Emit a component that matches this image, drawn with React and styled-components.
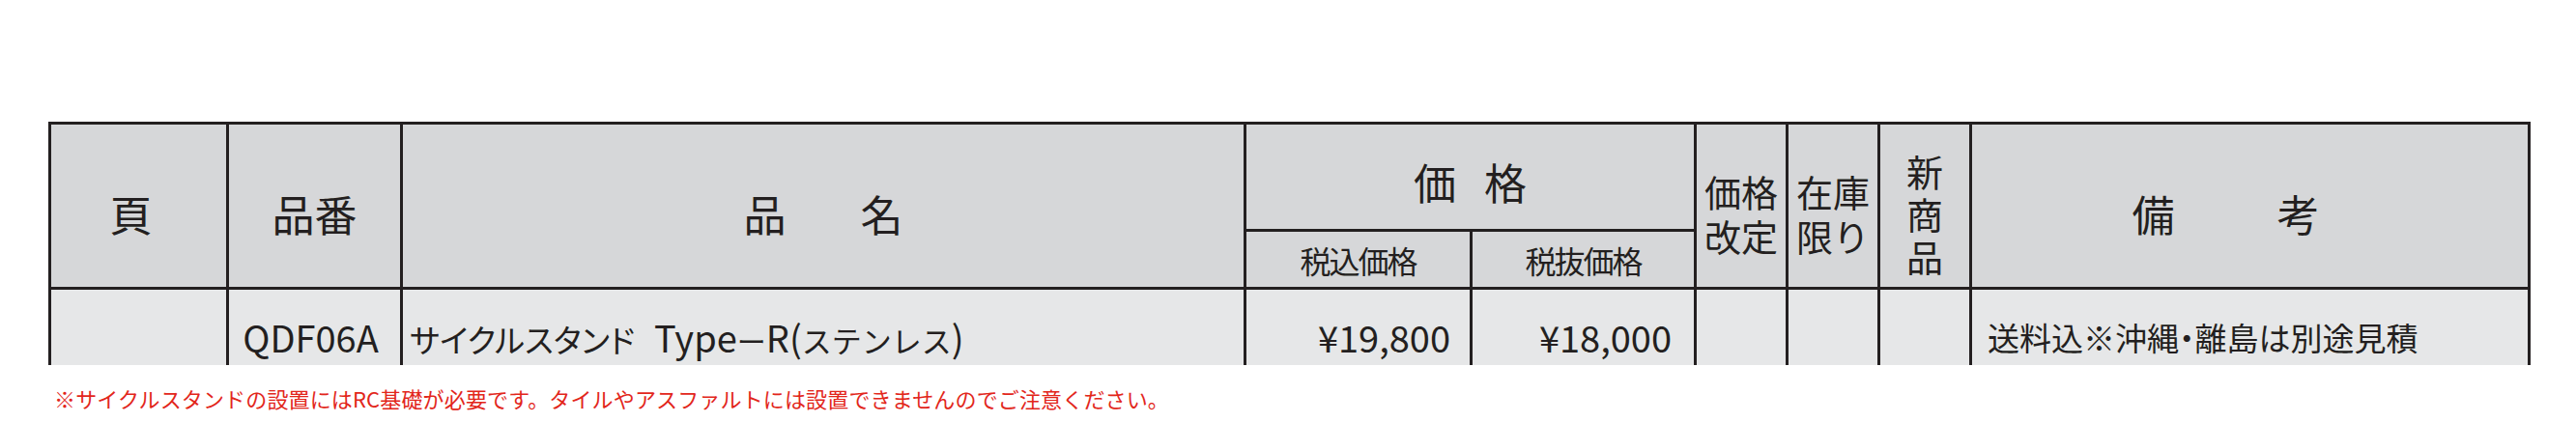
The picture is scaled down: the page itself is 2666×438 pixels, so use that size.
import React from "react";
import styled, { createGlobalStyle } from "styled-components";

const Global = createGlobalStyle`
  html, body {
    margin: 0;
    background: #ffffff;
  }
  body {
    font-family: "Noto Sans CJK JP", "Noto Sans", sans-serif;
    color: #231f20;
  }
`;

const Page = styled.div`
  box-sizing: border-box;
  width: 2666px;
  height: 438px;
  padding: 126px 0 0 50px;
  overflow: hidden;
`;

// the picture is cut off in the middle of the first body row
const Frame = styled.div`
  width: 2569px;
  height: 252px;
  overflow: hidden;
`;

const Grid = styled.div`
  display: grid;
  grid-template-columns: 181px 177px 870px 231px 229px 92px 92px 92px 575px;
  grid-template-rows: 108px 57px 104px;
  gap: 3px;
  padding: 3px;
  background: #231f20;
  width: max-content;
`;

const Cell = styled.div`
  box-sizing: border-box;
  display: flex;
  align-items: center;
  justify-content: ${(p) => p.$justify || "center"};
  grid-column: ${(p) => p.$col};
  grid-row: ${(p) => p.$row};
  background: ${(p) => (p.$head ? "#d6d7d9" : "#e6e7e8")};
  padding: ${(p) => p.$pad || "0"};
  white-space: nowrap;
`;

const HeadText = styled.span`
  display: flex;
  gap: ${(p) => p.$gap || "0px"};
  font-size: ${(p) => p.$size || "44px"};
  line-height: 1;
  letter-spacing: ${(p) => p.$track || "0"};
`;

const Stack = styled.span`
  display: flex;
  flex-direction: column;
  align-items: center;
  font-size: 38px;
  line-height: ${(p) => p.$lh || "46px"};
`;

const BodyText = styled.span`
  font-size: 33px;
  line-height: 1;
  font-feature-settings: "palt";
`;

const Latin = styled.span`
  font-size: 38px;
  margin-left: ${(p) => p.$lead || "0"};
`;

// full-width kana, not narrowed by palt
const Wide = styled.span`
  font-size: ${(p) => p.$size || "31px"};
  font-feature-settings: normal;
`;

const Note = styled.p`
  margin: 23px 0 0;
  padding-left: 6px;
  font-size: 22px;
  line-height: 22px;
  letter-spacing: 0.15px;
  color: #e2261b;
`;

export default function App() {
  return (
    <>
      <Global />
      <Page>
        <Frame>
          <Grid>
            <Cell $head $col="1" $row="1 / 3" $pad="16px 16px 0 0">
              <HeadText>頁</HeadText>
            </Cell>
            <Cell $head $col="2" $row="1 / 3" $pad="16px 0 0 0">
              <HeadText>品番</HeadText>
            </Cell>
            <Cell $head $col="3" $row="1 / 3" $pad="16px 0 0 0">
              <HeadText $gap="77px">
                <span>品</span>
                <span>名</span>
              </HeadText>
            </Cell>
            <Cell $head $col="4 / 6" $row="1" $pad="10px 0 0 0">
              <HeadText $gap="29px">
                <span>価</span>
                <span>格</span>
              </HeadText>
            </Cell>
            <Cell $head $col="4" $row="2">
              <HeadText $size="32px" $track="-2px">税込価格</HeadText>
            </Cell>
            <Cell $head $col="5" $row="2">
              <HeadText $size="32px" $track="-2px">税抜価格</HeadText>
            </Cell>
            <Cell $head $col="6" $row="1 / 3" $pad="16px 0 0 0">
              <Stack>
                <span>価格</span>
                <span>改定</span>
              </Stack>
            </Cell>
            <Cell $head $col="7" $row="1 / 3" $pad="16px 0 0 0">
              <Stack>
                <span>在庫</span>
                <span>限り</span>
              </Stack>
            </Cell>
            <Cell $head $col="8" $row="1 / 3" $pad="16px 0 0 0">
              <Stack $lh="44px">
                <span>新</span>
                <span>商</span>
                <span>品</span>
              </Stack>
            </Cell>
            <Cell $head $col="9" $row="1 / 3" $pad="16px 50px 0 0">
              <HeadText $gap="106px">
                <span>備</span>
                <span>考</span>
              </HeadText>
            </Cell>

            <Cell $col="1" $row="3" />
            <Cell $col="2" $row="3" $pad="0 8px 6px 0">
              <BodyText>
                <Latin>QDF06A</Latin>
              </BodyText>
            </Cell>
            <Cell $col="3" $row="3" $justify="flex-start" $pad="0 0 6px 7px">
              <BodyText>
                サイクルスタンド<Latin $lead="20px">Type</Latin>
                <Wide $size="30px">ー</Wide>
                <Latin>R(</Latin>
                <Wide>ステンレス</Wide>
                <Latin>)</Latin>
              </BodyText>
            </Cell>
            <Cell $col="4" $row="3" $justify="flex-end" $pad="0 20px 6px 0">
              <BodyText>
                <Latin>¥19,800</Latin>
              </BodyText>
            </Cell>
            <Cell $col="5" $row="3" $justify="flex-end" $pad="0 23px 6px 0">
              <BodyText>
                <Latin>¥18,000</Latin>
              </BodyText>
            </Cell>
            <Cell $col="6" $row="3" />
            <Cell $col="7" $row="3" />
            <Cell $col="8" $row="3" />
            <Cell $col="9" $row="3" $justify="flex-start" $pad="0 0 6px 16px">
              <BodyText>送料込※沖縄・離島は別途見積</BodyText>
            </Cell>
          </Grid>
        </Frame>
        <Note>
          ※サイクルスタンドの設置にはRC基礎が必要です。タイルやアスファルトには設置できませんのでご注意ください。
        </Note>
      </Page>
    </>
  );
}
